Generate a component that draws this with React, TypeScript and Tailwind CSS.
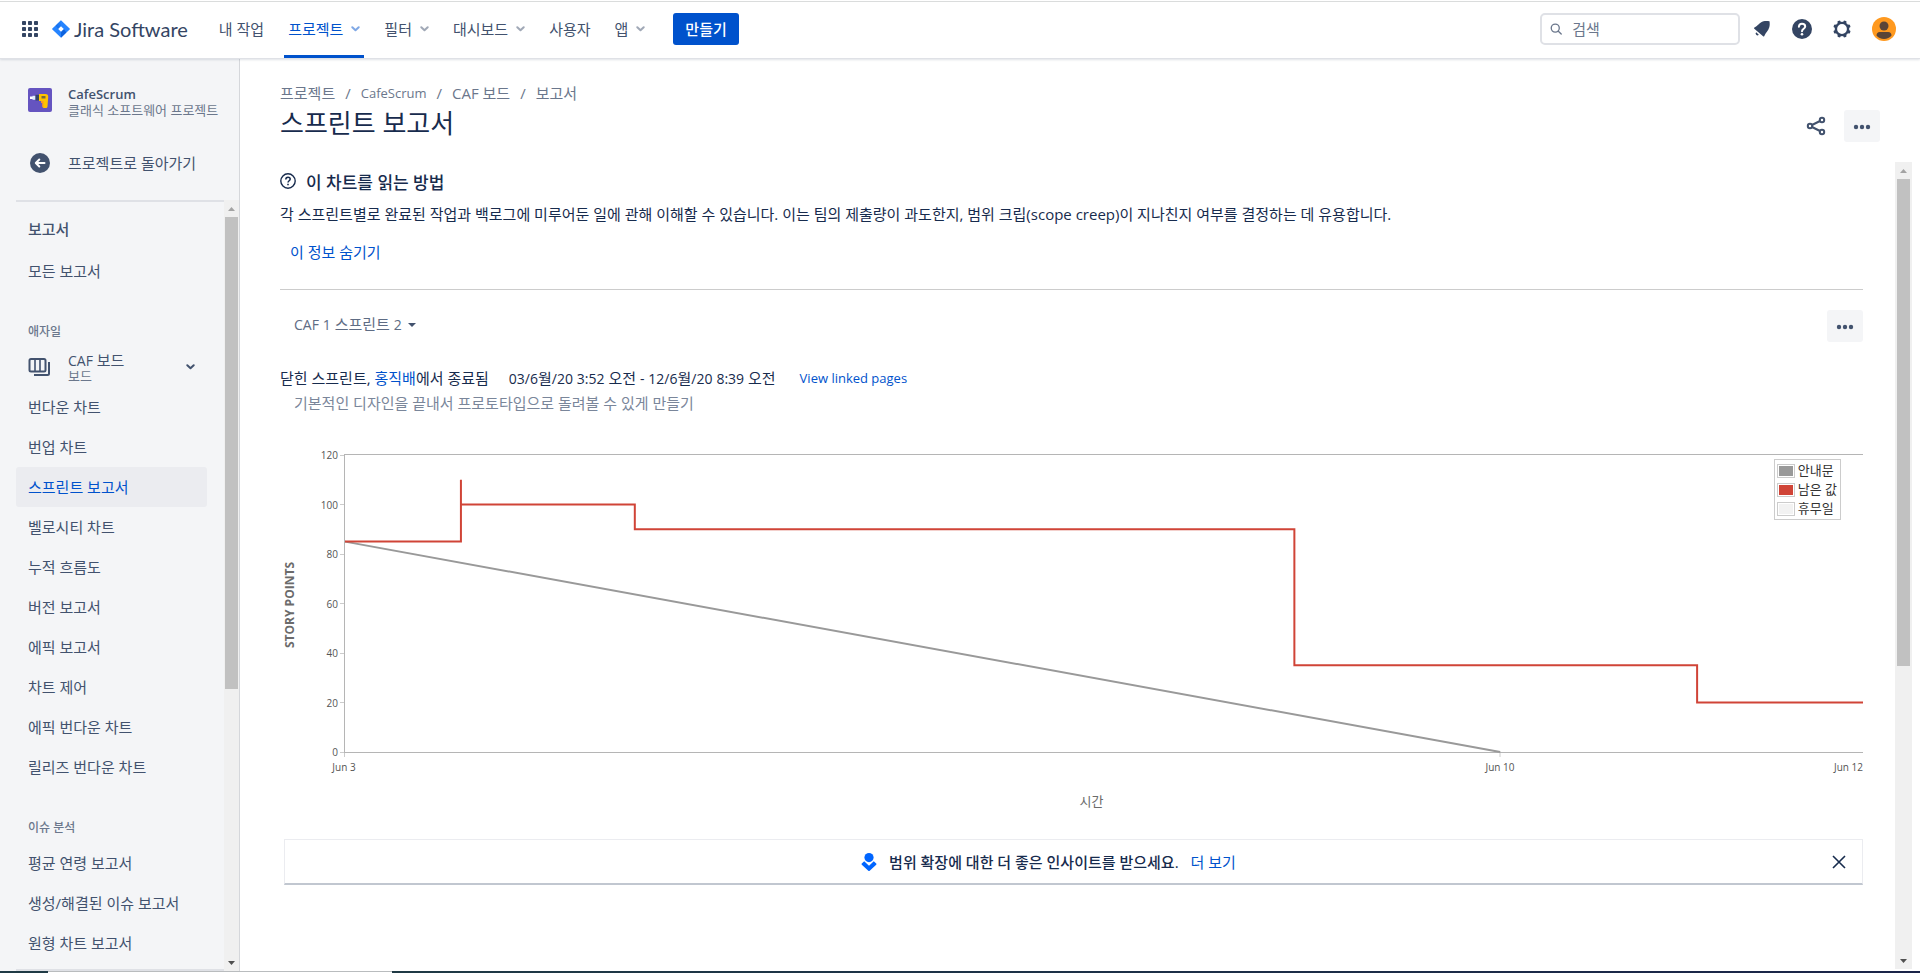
import React from "react";

type NavEntry = { label: string; menu?: boolean; active?: boolean };

const NAV: NavEntry[] = [
  { label: "내 작업" },
  { label: "프로젝트", menu: true, active: true },
  { label: "필터", menu: true },
  { label: "대시보드", menu: true },
  { label: "사용자" },
  { label: "앱", menu: true },
];

const AGILE = [
  "번다운 차트",
  "번업 차트",
  "스프린트 보고서",
  "벨로시티 차트",
  "누적 흐름도",
  "버전 보고서",
  "에픽 보고서",
  "차트 제어",
  "에픽 번다운 차트",
  "릴리즈 번다운 차트",
];

const ISSUES = ["평균 연령 보고서", "생성/해결된 이슈 보고서", "원형 차트 보고서"];

/* Latin and digit runs are set smaller than the Hangul around them. */
function Mixed({ text }: { text: string }) {
  return (
    <>
      {text.split(/([A-Za-z0-9:/()-]+)/).map((part, i) =>
        i % 2 ? <span key={i} className="text-[14px]">{part}</span> : part,
      )}
    </>
  );
}

function Chevron({ className }: { className: string }) {
  return (
    <svg viewBox="0 0 9 6" className={className} fill="none" aria-hidden="true">
      <path d="M1.3 1.2 4.5 4.2 7.7 1.2" stroke="currentColor" strokeWidth="2" strokeLinecap="round" strokeLinejoin="round" />
    </svg>
  );
}

function Scrollbar({ className, thumb }: { className: string; thumb: string }) {
  return (
    <div className={`flex shrink-0 flex-col items-center bg-[#f0f0f0] ${className}`} aria-hidden="true">
      <div className="flex h-[17px] shrink-0 items-center">
        <svg viewBox="0 0 7 4" className="h-1 w-[7px]" fill="#a3a3a3"><path d="M0 4 3.5 0 7 4z" /></svg>
      </div>
      <div className="min-h-0 w-full flex-1 px-px">
        <div className={`w-full bg-[#c1c1c1] ${thumb}`} />
      </div>
      <div className="flex h-[17px] shrink-0 items-center">
        <svg viewBox="0 0 7 4" className="h-1 w-[7px]" fill="#505050"><path d="M0 0h7L3.5 4z" /></svg>
      </div>
    </div>
  );
}

function MoreButton({ label }: { label: string }) {
  return (
    <button aria-label={label} className="flex h-8 w-9 items-center justify-center rounded-[3px] bg-[#f4f5f7] text-[#42526e]">
      <svg viewBox="0 0 18 6" className="mt-0.5 h-1.5 w-[18px]" fill="currentColor">
        <circle cx="3" cy="3" r="2.2" /><circle cx="9" cy="3" r="2.2" /><circle cx="15" cy="3" r="2.2" />
      </svg>
    </button>
  );
}

function TopBar() {
  return (
    <header className="relative z-10 flex h-[59px] shrink-0 items-stretch border-b border-[#dfe1e6] bg-white pr-6 pl-[22px] shadow-[0_1px_2px_rgba(9,30,66,0.12)]">
      <button aria-label="앱 전환" className="flex items-center text-[#344563]">
        <svg viewBox="0 0 16 16" className="size-4" fill="currentColor">
          {[0, 6, 12].map((y) => [0, 6, 12].map((x) => <rect key={`${x}-${y}`} x={x} y={y} width="4" height="4" rx="0.8" />))}
        </svg>
      </button>
      <a href="#" className="ml-3.5 flex items-center gap-1 text-[#344563]">
        <svg viewBox="0 0 18 18" className="size-[18px]" aria-hidden="true">
          <defs>
            <linearGradient id="fold" x1="0" y1="1" x2="1" y2="0"><stop offset="0.2" stopColor="#0052cc" /><stop offset="1" stopColor="#2684ff" /></linearGradient>
          </defs>
          <path d="M9 0.2 17.6 8.4a.8.8 0 0 1 0 1.2L9 17.8.4 9.6a.8.8 0 0 1 0-1.2z" fill="#2684ff" />
          <path d="M9 .2v6L6.2 9 3.6 5.4z" fill="url(#fold)" opacity=".4" />
          <path d="M9 17.8v-6L11.8 9l2.6 3.6z" fill="#0052cc" opacity=".65" />
          <path d="M9 6.2 11.8 9 9 11.8 6.2 9z" fill="#fff" />
        </svg>
        <span className="font-['Lato'] text-[20px] leading-6">Jira Software</span>
      </a>
      <nav className="ml-[27px] flex gap-4">
        {NAV.map((n) => (
          <a
            key={n.label}
            href="#"
            className={`flex items-center gap-2 border-b-[3px] px-1 pt-[3px] text-[15px] leading-5 ${n.active ? "border-[#0052cc] text-[#0052cc]" : "border-transparent text-[#42526e]"}`}
          >
            {n.label}
            {n.menu && <Chevron className={`h-1.5 w-[9px] ${n.active ? "text-[#0052cc]/50" : "text-[#42526e]/50"}`} />}
          </a>
        ))}
      </nav>
      <button className="ml-6 h-8 self-center rounded-[3px] bg-[#0052cc] px-3 text-[15px] leading-5 font-medium text-white">만들기</button>
      <div className="ml-auto flex items-center">
        <label className="flex h-8 w-[200px] items-center gap-2.5 rounded-[5px] border-2 border-[#dfe1e6] px-2 text-[#6b778c]">
          <svg viewBox="0 0 14 14" className="size-[14px]" fill="none" stroke="currentColor" strokeWidth="1.5" aria-hidden="true">
            <circle cx="6" cy="6" r="4.6" /><path d="m9.5 9.5 3.3 3.3" strokeLinecap="round" />
          </svg>
          <input aria-label="검색" placeholder="검색" className="w-full min-w-0 bg-transparent text-[15px] leading-5 outline-none placeholder:text-[#6b778c]" />
        </label>
        <button aria-label="알림" className="ml-3 text-[#344563]">
          <svg viewBox="0 0 20 20" className="size-5" fill="currentColor">
            <path d="M2.300 9.800c-.5-.5-.4-.9.200-1.200C6 7 7.500 3.300 11.500 2.300c1.800-.4 3.800-.3 6-.1.300 2.200.400 4.200-.2 6-1 3.500-3.700 5.500-5 8.800-.3.600-.8.700-1.200.2z" />
            <path d="M4.200 13.200a1.800 1.800 0 0 0 2.600 2.600z" />
          </svg>
        </button>
        <button aria-label="도움말" className="ml-5 text-[#344563]">
          <svg viewBox="0 0 20 20" className="size-5">
            <circle cx="10" cy="10" r="10" fill="currentColor" />
            <path d="M6.900 7.700C7 5.900 8.200 4.800 10 4.800s3.200 1.100 3.200 2.700c0 2.200-3.200 2.300-3.200 4.700" fill="none" stroke="#fff" strokeWidth="2" strokeLinecap="round" />
            <circle cx="10" cy="15.200" r="1.300" fill="#fff" />
          </svg>
        </button>
        <button aria-label="설정" className="ml-5 text-[#344563]">
          <svg viewBox="0 0 20 20" className="size-5">
            <circle cx="10" cy="10" r="6.100" fill="none" stroke="currentColor" strokeWidth="2.400" />
            {[22.5, 67.5, 112.5, 157.5, 202.5, 247.5, 292.5, 337.5].map((a) => (
              <rect key={a} x="8.400" y="1.200" width="3.200" height="3" rx="1" fill="currentColor" transform={`rotate(${a} 10 10)`} />
            ))}
          </svg>
        </button>
        <button aria-label="프로필" className="ml-5">
          <svg viewBox="0 0 24 24" className="size-6">
            <circle cx="12" cy="12" r="12" fill="#ff991f" />
            <circle cx="12" cy="9" r="4.500" fill="#5a4437" />
            <path d="M4.500 18.500c0-2 1.300-3.500 3.200-3.500h8.600c1.900 0 3.200 1.500 3.200 3.500-1.700 2-4.400 3.500-7.500 3.500s-5.800-1.500-7.500-3.500z" fill="#5a4437" />
          </svg>
        </button>
      </div>
    </header>
  );
}

function SideLink({ label, active }: { label: string; active?: boolean }) {
  return (
    <li>
      <a
        href="#"
        className={`flex h-10 items-center rounded-[3px] px-3 text-[15px] leading-5 ${active ? "bg-[#ebecf0] text-[#0052cc]" : "text-[#42526e]"}`}
      >
        {label}
      </a>
    </li>
  );
}

function Sidebar() {
  return (
    <aside className="flex w-60 shrink-0 flex-col border-r border-[#d5d7db] bg-[#f4f5f7] text-[#42526e]">
      <div className="flex items-center gap-4 px-7 pt-6">
        <svg viewBox="0 0 24 24" className="size-6 shrink-0" aria-hidden="true">
          <rect width="24" height="24" rx="2" fill="#6554c0" />
          <path d="M2 8.500h5v2.500H2z" fill="#fff" /><path d="M4.500 7.800h3v4h-3z" fill="#deebff" />
          <path d="M7.500 6.800h4v5.700h-4z" fill="#344563" />
          <path d="M11 6h6.500a2.800 2.800 0 0 1 2.700 3l-.7 9.500c0 .9-.6 1.500-1.500 1.500h-2c-.9 0-1.400-.6-1.400-1.500V13H11z" fill="#ffc400" />
          <path d="M13 13h2.500v5.500c0 .6.200 1 .5 1.300-1.200-.2-1.700-.8-1.700-1.800V15H13z" fill="#ff991f" />
          <path d="M13.500 8h4v2.500h-4z" fill="#7a6b3a" />
        </svg>
        <div className="pt-[3px] whitespace-nowrap">
          <div className="text-[13px] leading-[17px] font-semibold">CafeScrum</div>
          <div className="text-[13px] leading-[14px] text-[#6b778c]">클래식 소프트웨어 프로젝트</div>
        </div>
      </div>
      <a href="#" className="mt-[26px] mb-[17px] flex h-10 items-center gap-[18px] px-[30px] text-[15px] leading-5">
        <svg viewBox="0 0 20 20" className="size-5" aria-hidden="true">
          <circle cx="10" cy="10" r="10" fill="currentColor" />
          <path d="M14.500 10H6M9.300 6.500 5.800 10l3.500 3.500" stroke="#fff" strokeWidth="2" fill="none" strokeLinecap="round" strokeLinejoin="round" />
        </svg>
        프로젝트로 돌아가기
      </a>
      <div className="flex min-h-0 flex-1">
        <div className="ml-4 flex min-w-0 flex-1 flex-col overflow-hidden border-y-2 border-[#dfe1e6]">
          <div className="pt-[7px] pr-[17px]">
            <h2 className="flex h-10 items-center px-3 text-[15px] leading-5 font-medium">보고서</h2>
            <ul className="mt-0.5"><SideLink label="모든 보고서" /></ul>
            <h3 className="mt-6 flex h-8 items-center px-3 pt-0.5 text-[12px] leading-4 font-medium text-[#6b778c]">애자일</h3>
            <button className="flex h-10 w-full items-center gap-3.5 px-3 text-left">
              <svg viewBox="0 0 22 20" className="h-5 w-[22px]" fill="none" stroke="currentColor" strokeWidth="2" aria-hidden="true">
                <rect x="1.500" y="2" width="16" height="12.500" rx="1.500" /><path d="M7 2v12.500M12 2v12.500" strokeWidth="1.600" />
                <path d="M21 5v11.500a1.500 1.500 0 0 1-1.500 1.500H6" />
              </svg>
              <span className="ml-1 flex-1">
                <span className="block text-[15px] leading-[17px]"><Mixed text="CAF 보드" /></span>
                <span className="block text-[13px] leading-[14px] text-[#6b778c]">보드</span>
              </span>
              <Chevron className="h-1.5 w-[9px]" />
            </button>
            <ul>{AGILE.map((l) => <SideLink key={l} label={l} active={l === "스프린트 보고서"} />)}</ul>
            <h3 className="mt-6 flex h-8 items-center px-3 pt-0.5 text-[12px] leading-4 font-medium text-[#6b778c]">이슈 분석</h3>
            <ul>{ISSUES.map((l) => <SideLink key={l} label={l} />)}</ul>
          </div>
        </div>
        <Scrollbar className="w-[15px]" thumb="h-[64%]" />
      </div>
    </aside>
  );
}

const START = 344;
const PLOT = 1519;
const pct = (x: number) => ((x - START) / PLOT) * 100;
const REMAINING: [number, number][] = [
  [0, 85], [pct(460), 85], [pct(460), 110], [pct(460), 100], [pct(634), 100], [pct(634), 90],
  [pct(1294), 90], [pct(1294), 35], [pct(1697), 35], [pct(1697), 20], [100, 20],
];
const JUN10 = pct(1500);
const toPoints = (pts: [number, number][]) => pts.map(([x, y]) => `${x},${120 - y}`).join(" ");

function BurndownChart() {
  return (
    <figure className="mt-[34px] grid grid-cols-[20px_44px_1fr] text-[10px] text-[#545454]">
      <div className="flex items-center justify-center pt-1">
        <span className="rotate-180 text-[12px] leading-4 font-bold whitespace-nowrap text-[#6b6b6b] [writing-mode:vertical-rl]">STORY POINTS</span>
      </div>
      <div className="flex h-[313px] flex-col justify-between">
        {[120, 100, 80, 60, 40, 20, 0].map((v) => (
          <div key={v} className="flex h-4 items-center justify-end gap-0.5 leading-4">
            {v}<span className="h-px w-1 bg-[#cccccc]" />
          </div>
        ))}
      </div>
      <div className="relative pt-[7px]">
        <svg viewBox="0 0 100 120" preserveAspectRatio="none" className="block h-[299px] w-full overflow-visible border-y border-l border-[#b5b5b5]" role="img" aria-label="스프린트 번다운">
          <polyline points={toPoints([[0, 85], [JUN10, 0]])} fill="none" stroke="#999" strokeWidth="2" vectorEffect="non-scaling-stroke" />
          <polyline points={toPoints(REMAINING)} fill="none" stroke="#d04437" strokeWidth="2" vectorEffect="non-scaling-stroke" />
        </svg>
        <ul className="absolute top-3 right-[22px] border border-[#cccccc] bg-white py-px pr-[3px] pl-0.5 text-[13px] text-[#333]">
          {[["안내문", "bg-[#999999]"], ["남은 값", "bg-[#d04437]"], ["휴무일", "bg-[#f2f2f2]"]].map(([l, c]) => (
            <li key={l} className="flex h-[19px] items-center gap-[3px] leading-[19px]">
              <span className="h-3.5 w-[18px] border border-[#cccccc] p-px"><span className={`block size-full ${c}`} /></span>
              {l}
            </li>
          ))}
        </ul>
      </div>
      <svg className="col-start-3 h-8 w-full overflow-visible" fill="#545454" aria-hidden="true">
        <line x1="0.5" x2="0.5" y1="-7" y2="-3" stroke="#ccc" />
        <line x1={`${JUN10}%`} x2={`${JUN10}%`} y1="-7" y2="-3" stroke="#ccc" />
        <text x="0" y="11" textAnchor="middle">Jun 3</text>
        <text x={`${JUN10}%`} y="11" textAnchor="middle">Jun 10</text>
        <text x="100%" y="11" textAnchor="end">Jun 12</text>
      </svg>
      <figcaption className="col-span-3 pt-px pl-10 text-center text-[13px] leading-4 text-[#6b6b6b]">시간</figcaption>
    </figure>
  );
}

function Report() {
  return (
    <main className="flex min-w-0 flex-1 flex-col pr-2 text-[#172b4d]">
      <div className="flex h-[103px] shrink-0 items-start justify-between pr-8 pl-10">
        <div>
          <nav className="flex gap-2.5 pt-6 text-[15px] leading-5 text-[#6b778c]">
            <a href="#">프로젝트</a><span>/</span>
            <a href="#" className="text-[13px]">CafeScrum</a><span>/</span>
            <a href="#">CAF 보드</a><span>/</span>
            <a href="#">보고서</a>
          </nav>
          <h1 className="mt-1 text-[26px] leading-8">스프린트 보고서</h1>
        </div>
        <div className="flex items-center gap-[18px] pt-[51px] text-[#42526e]">
          <button aria-label="공유">
            <svg viewBox="0 0 20 20" className="size-5" fill="none" stroke="currentColor" strokeWidth="2">
              <circle cx="4" cy="10" r="2.200" /><circle cx="16" cy="4" r="2.200" /><circle cx="16" cy="16" r="2.200" />
              <path d="M6 9 14 5M6 11l8 4" />
            </svg>
          </button>
          <MoreButton label="기타 작업" />
        </div>
      </div>
      <div className="flex min-h-0 flex-1 pb-0.5">
        <div className="min-w-0 flex-1 overflow-hidden pr-8 pl-10">
          <h2 className="flex items-center gap-2.5 pt-[9px] text-[17px] leading-6 font-medium">
            <svg viewBox="0 0 16 16" className="-mt-1 size-4" fill="none" stroke="currentColor" strokeWidth="1.400" aria-hidden="true">
              <circle cx="8" cy="8" r="7.200" />
              <path d="M5.800 6.500C5.800 5 6.700 4.200 8 4.200s2.200.8 2.200 1.900C10.200 7.700 8 7.800 8 9.500" strokeWidth="1.500" /><path d="M8 10.800v1.500" strokeWidth="1.600" />
            </svg>
            이 차트를 읽는 방법
          </h2>
          <p className="mt-[9px] text-[15px] leading-5">
            각 스프린트별로 완료된 작업과 백로그에 미루어둔 일에 관해 이해할 수 있습니다. 이는 팀의 제출량이 과도한지, 범위 크립(scope creep)이 지나친지 여부를 결정하는 데 유용합니다.
          </p>
          <button className="mt-[17px] ml-2.5 block h-[22px] text-[15px] leading-5 text-[#0052cc]">이 정보 숨기기</button>
          <hr className="mt-[26px] border-[#cccccc]" />
          <div className="mt-5 flex items-start justify-between">
            <button className="ml-3.5 flex items-center gap-1.5 pt-1 text-[15px] leading-5 text-[#5e6c84]">
              <span><Mixed text="CAF 1 스프린트 2" /></span>
              <svg viewBox="0 0 8 4" className="h-1 w-2" fill="#42526e" aria-hidden="true"><path d="M0 0h8L4 4z" /></svg>
            </button>
            <MoreButton label="스프린트 작업" />
          </div>
          <div className="mt-[26px] flex text-[15px] leading-5">
            <span>닫힌 스프린트, <a href="#" className="text-[#0052cc]">홍직배</a>에서 종료됨</span>
            <span className="ml-5"><Mixed text="03/6월/20 3:52 오전 - 12/6월/20 8:39 오전" /></span>
            <a href="#" className="ml-6 text-[13px] text-[#0052cc]">View linked pages</a>
          </div>
          <p className="mt-1 ml-3.5 text-[15px] leading-5 text-[#7a869a]">기본적인 디자인을 끝내서 프로토타입으로 돌려볼 수 있게 만들기</p>
          <BurndownChart />
          <section className="mt-[30px] ml-1 flex h-[46px] items-center border border-b-2 border-[#ebecf0] border-b-[#c1c7d0] pr-4">
            <div className="flex flex-1 items-center justify-center gap-3 pr-5 text-[15px] leading-5">
              <svg viewBox="0 0 16 18" className="h-[18px] w-4" fill="#0065ff" aria-hidden="true">
                <circle cx="8" cy="4.600" r="4.600" />
                <path d="M3.200 8.200 8 12.700l4.800-4.500 2.400 2.200c.4.400.4.900 0 1.300L8.700 17.700c-.4.400-1 .4-1.400 0L.8 11.700c-.4-.4-.4-.9 0-1.300z" />
              </svg>
              <strong className="font-medium">범위 확장에 대한 더 좋은 인사이트를 받으세요.</strong>
              <a href="#" className="text-[#0052cc]">더 보기</a>
            </div>
            <button aria-label="닫기">
              <svg viewBox="0 0 14 14" className="size-3.5" fill="none" stroke="#172b4d" strokeWidth="1.600"><path d="m1 1 12 12M13 1 1 13" /></svg>
            </button>
          </section>
        </div>
        <Scrollbar className="w-[17px] px-px" thumb="h-[63%]" />
      </div>
    </main>
  );
}

export default function App() {
  return (
    <div className="flex h-screen flex-col overflow-hidden bg-white font-['Open_Sans','Noto_Sans_CJK_KR',sans-serif]">
      <div className="relative z-20 -mb-0.5 h-0.5 shrink-0 border-b border-[#dadcdc]" />
      <TopBar />
      <div className="flex min-h-0 flex-1">
        <Sidebar />
        <Report />
      </div>
      <div className="flex h-0.5 shrink-0" aria-hidden="true">
        <div className="w-12 bg-[#1f3a45]" />
        <div className="w-[344px] border-t border-[#b9bcbe]" />
        <div className="flex-1 bg-linear-to-r from-[#1f3a45] to-[#1a2448]" />
      </div>
    </div>
  );
}
